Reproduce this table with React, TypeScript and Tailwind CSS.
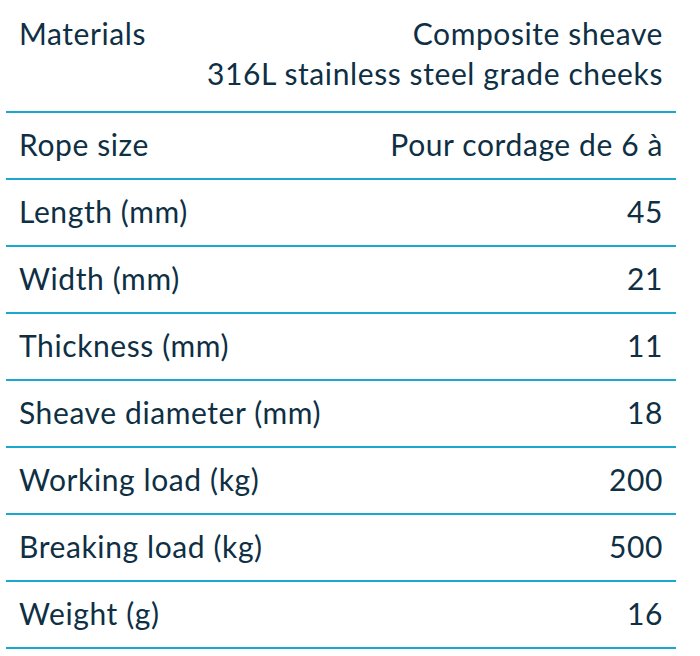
const rows: [string, string[]][] = [
  ["Materials", ["Composite sheave", "316L stainless steel grade cheeks"]],
  ["Rope size", ["Pour cordage de 6 à"]],
  ["Length (mm)", ["45"]],
  ["Width (mm)", ["21"]],
  ["Thickness (mm)", ["11"]],
  ["Sheave diameter (mm)", ["18"]],
  ["Working load (kg)", ["200"]],
  ["Breaking load (kg)", ["500"]],
  ["Weight (g)", ["16"]],
];

export default function App() {
  return (
    <div
      className="w-[700px] h-[656px] bg-white pl-[6px] pr-[24px] text-[#0e2f44]"
      style={{ fontFamily: "Lato, 'Open Sans', sans-serif" }}
    >
      {rows.map(([label, values], i) => (
        <div
          key={label}
          className={`flex justify-between border-b-2 border-[#1ba8ce] px-[13px] text-[30px] leading-[40px] tracking-[0.6px] ${
            i === 0 ? "pt-[13px] pb-[18px]" : "pt-[11px] pb-[14px]"
          }`}
        >
          <div>{label}</div>
          <div className="text-right">
            {values.map((v) => (
              <div key={v}>{v}</div>
            ))}
          </div>
        </div>
      ))}
    </div>
  );
}
